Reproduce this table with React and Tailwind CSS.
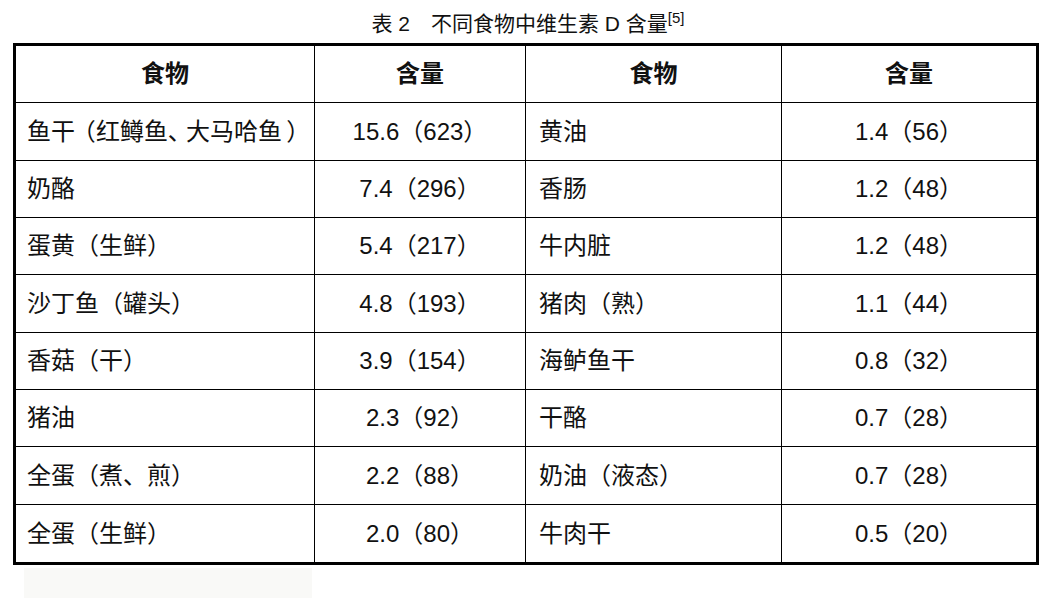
import React from "react";

const rows = [
  [null, "15.6（623）", "黄油", "1.4（56）"],
  ["奶酪", "7.4（296）", "香肠", "1.2（48）"],
  ["蛋黄（生鲜）", "5.4（217）", "牛内脏", "1.2（48）"],
  ["沙丁鱼（罐头）", "4.8（193）", "猪肉（熟）", "1.1（44）"],
  ["香菇（干）", "3.9（154）", "海鲈鱼干", "0.8（32）"],
  ["猪油", "2.3（92）", "干酪", "0.7（28）"],
  ["全蛋（煮、煎）", "2.2（88）", "奶油（液态）", "0.7（28）"],
  ["全蛋（生鲜）", "2.0（80）", "牛肉干", "0.5（20）"],
];

const heights = ["h-[58px]", "h-[57px]", "h-[57px]", "h-[58px]", "h-[57px]", "h-[57px]", "h-[58px]", "h-[57px]"];

function FirstName() {
  return (
    <span className="flex items-center">
      <span>鱼干</span>
      <span className="ml-[8px] [font-feature-settings:'palt']">（</span>
      <span className="ml-[1px]">红鳟鱼</span>
      <span className="mr-[6px] [font-feature-settings:'palt']">、</span>
      <span>大马哈鱼</span>
      <span className="ml-[5px] [font-feature-settings:'palt']">）</span>
    </span>
  );
}

export default function App() {
  return (
    <div className="w-[1056px] h-[598px] bg-white text-[#111] font-['Liberation_Sans','Noto_Sans_CJK_SC',sans-serif] overflow-hidden">
      <div className="w-[1056px] h-[43px] pt-[4px] flex items-center justify-center text-[21px] leading-none">
        <span className="flex items-start">
          <span>表 2　不同食物中维生素 D 含量</span>
          <span className="text-[15px] leading-none -mt-[3px]">[5]</span>
        </span>
      </div>
      <div className="ml-[13px] w-[1026px] border-[3px] border-black">
        <div className="grid grid-cols-[299px_211px_256px_254px] h-[57px] text-[24px] font-bold leading-none">
          <div className="border-r border-b border-black flex items-center justify-center">食物</div>
          <div className="border-r border-b border-black flex items-center justify-center">含量</div>
          <div className="border-r border-b border-black flex items-center justify-center">食物</div>
          <div className="border-b border-black flex items-center justify-center">含量</div>
        </div>
        {rows.map((r, i) => {
          const last = i === rows.length - 1;
          const bb = last ? "" : "border-b";
          return (
            <div key={i} className={`grid grid-cols-[299px_211px_256px_254px] ${heights[i]} text-[24px] leading-none`}>
              <div className={`border-r ${bb} border-black flex items-center pl-[11px] whitespace-nowrap`}>
                {r[0] === null ? <FirstName /> : r[0]}
              </div>
              <div className={`border-r ${bb} border-black flex items-center justify-center whitespace-nowrap`}>{r[1]}</div>
              <div className={`border-r ${bb} border-black flex items-center pl-[13px] whitespace-nowrap`}>{r[2]}</div>
              <div className={`${bb} border-black flex items-center justify-center whitespace-nowrap`}>{r[3]}</div>
            </div>
          );
        })}
      </div>
      <div className="ml-[24px] mt-[3px] w-[288px] h-[30px] bg-[#f9f9f7]" />
    </div>
  );
}
